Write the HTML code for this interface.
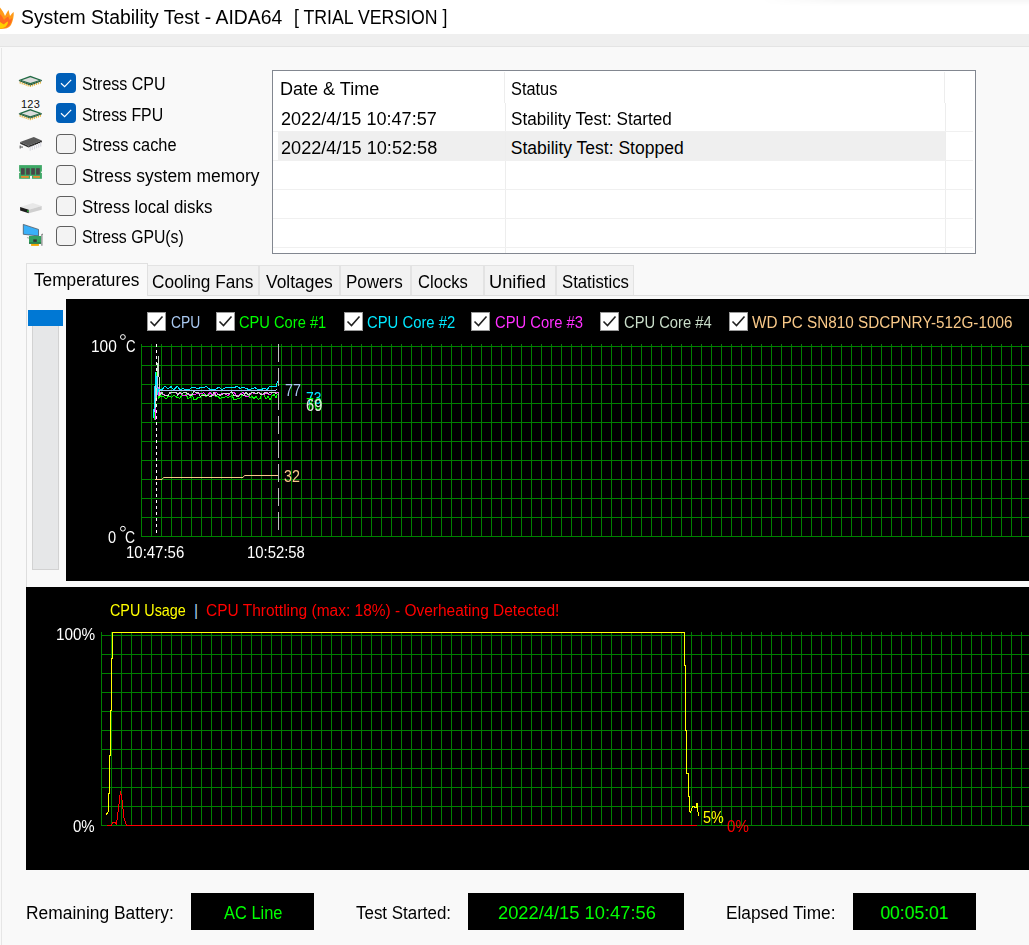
<!DOCTYPE html>
<html><head><meta charset="utf-8"><title>System Stability Test - AIDA64</title>
<style>
*{margin:0;padding:0;box-sizing:border-box}
html,body{width:1029px;height:945px;overflow:hidden;background:#f9f9f9;font-family:"Liberation Sans", sans-serif;}
body{position:relative}
.t{position:absolute;white-space:pre;font-family:"Liberation Sans", sans-serif;transform-origin:0 0}
.ov{position:absolute;left:0;top:0}
.ic{position:absolute}
#title{position:absolute;left:0;top:0;width:1029px;height:34px;background:#fff}
#shadow{position:absolute;left:760px;top:0;width:269px;height:6px;background:linear-gradient(to bottom,rgba(0,0,0,0.035),rgba(0,0,0,0));-webkit-mask-image:linear-gradient(to right,transparent,#000 80px)}
#band{position:absolute;left:0;top:34px;width:1029px;height:13px;background:#efefef;border-bottom:1px solid #e4e4e4}
#lborder{position:absolute;left:1px;top:48px;width:1px;height:897px;background:#e6e6e6}
.cb{position:absolute;left:56px;width:20px;height:20px;border-radius:4px;background:#f3f3f3;border:1px solid #5f5f5f}
.cb.on{background:#005fb8;border:none}
.cb svg{position:absolute;left:0;top:0}
#table{position:absolute;left:272px;top:70px;width:704px;height:184px;background:#fff;border:1px solid #828790}
.hl{position:absolute;left:278px;top:131px;width:667px;height:29px;background:#efefef}
.vl{position:absolute;width:1px;background:#ededed}
.hz{position:absolute;height:1px;background:#f0f0f0}
.tab{position:absolute;top:265px;height:30px;background:#f2f2f2;border:1px solid #e3e3e3;border-bottom:none}
#tabact{position:absolute;left:26px;top:263px;width:122px;height:33px;background:#f9f9f9;border:1px solid #e0e0e0;border-bottom:none;}
#tabpanel{position:absolute;left:26px;top:295px;width:1010px;height:292px;background:#f9f9f9;border-left:1px solid #dedede;border-top:1px solid #dedede}
#slider{position:absolute;left:28px;top:310px;width:35px;height:16px;background:#0078d4}
#trough{position:absolute;left:32px;top:326px;width:27px;height:244px;background:#e6e7e8;border:1px solid #d2d2d2;border-top:none}
.lcb{position:absolute;width:19px;height:19px;background:#fff;border:1px solid #9a9a9a}
.lcb svg{position:absolute;left:-1px;top:-1px}
.box{position:absolute;top:893px;height:37px;background:#000}
</style></head><body>
<div id="title"></div><div id="shadow"></div>
<div id="band"></div>
<div id="lborder"></div>
<div class="cb on" style="top:73.0px"><svg width="20" height="20" viewBox="0 0 20 20"><path d="M5 10.2 L8.6 13.6 L15.2 6.8" stroke="#fff" stroke-width="1.2" fill="none"/></svg></div><div class="cb on" style="top:103.0px"><svg width="20" height="20" viewBox="0 0 20 20"><path d="M5 10.2 L8.6 13.6 L15.2 6.8" stroke="#fff" stroke-width="1.2" fill="none"/></svg></div><div class="cb" style="top:134.0px"></div><div class="cb" style="top:165.0px"></div><div class="cb" style="top:196.0px"></div><div class="cb" style="top:226.0px"></div>
<div id="table"></div>
<div class="hl"></div>
<div class="vl" style="left:504px;top:72px;height:31px"></div><div class="vl" style="left:505px;top:103px;height:150px"></div>
<div class="vl" style="left:944px;top:72px;height:31px"></div><div class="vl" style="left:945px;top:103px;height:150px"></div>
<div class="hz" style="left:273px;top:189px;width:700px"></div>
<div class="hz" style="left:273px;top:218px;width:700px"></div>
<div class="hz" style="left:273px;top:247px;width:700px"></div>
<div class="hz" style="left:273px;top:131px;width:700px"></div><div class="hz" style="left:273px;top:160px;width:700px"></div>
<div class="tab" style="left:147px;width:112px"></div>
<div class="tab" style="left:259px;width:81px"></div>
<div class="tab" style="left:340px;width:71px"></div>
<div class="tab" style="left:411px;width:73px"></div>
<div class="tab" style="left:484px;width:72px"></div>
<div class="tab" style="left:556px;width:78px"></div>
<div id="tabpanel"></div>
<div id="tabact"></div>
<div id="slider"></div>
<div id="trough"></div>
<div class="box" style="left:191px;width:123px"></div>
<div class="box" style="left:468px;width:216px"></div>
<div class="box" style="left:853px;width:123px"></div>
<svg class="ov" width="1029" height="945" viewBox="0 0 1029 945"><rect x="66" y="299" width="963" height="282" fill="#000"/>
<rect x="26" y="587" width="1003" height="283" fill="#000"/>
<path d="M141.5 344V537M151.5 344V537M161.5 344V537M171.5 344V537M181.5 344V537M191.5 344V537M201.5 344V537M211.5 344V537M221.5 344V537M231.5 344V537M241.5 344V537M251.5 344V537M261.5 344V537M271.5 344V537M281.5 344V537M291.5 344V537M301.5 344V537M311.5 344V537M321.5 344V537M331.5 344V537M341.5 344V537M351.5 344V537M361.5 344V537M371.5 344V537M381.5 344V537M391.5 344V537M401.5 344V537M411.5 344V537M421.5 344V537M431.5 344V537M441.5 344V537M451.5 344V537M461.5 344V537M471.5 344V537M481.5 344V537M491.5 344V537M501.5 344V537M511.5 344V537M521.5 344V537M531.5 344V537M541.5 344V537M551.5 344V537M561.5 344V537M571.5 344V537M581.5 344V537M591.5 344V537M601.5 344V537M611.5 344V537M621.5 344V537M631.5 344V537M641.5 344V537M651.5 344V537M661.5 344V537M671.5 344V537M681.5 344V537M691.5 344V537M701.5 344V537M711.5 344V537M721.5 344V537M731.5 344V537M741.5 344V537M751.5 344V537M761.5 344V537M771.5 344V537M781.5 344V537M791.5 344V537M801.5 344V537M811.5 344V537M821.5 344V537M831.5 344V537M841.5 344V537M851.5 344V537M861.5 344V537M871.5 344V537M881.5 344V537M891.5 344V537M901.5 344V537M911.5 344V537M921.5 344V537M931.5 344V537M941.5 344V537M951.5 344V537M961.5 344V537M971.5 344V537M981.5 344V537M991.5 344V537M1001.5 344V537M1011.5 344V537M1021.5 344V537M141 346.5H1029M141 365.5H1029M141 384.5H1029M141 403.5H1029M141 422.5H1029M141 441.5H1029M141 460.5H1029M141 479.5H1029M141 498.5H1029M141 517.5H1029M141 536.5H1029" stroke="#008000" stroke-width="1" fill="none" shape-rendering="crispEdges"/>
<path d="M101.5 632V826M111.5 632V826M121.5 632V826M131.5 632V826M141.5 632V826M151.5 632V826M161.5 632V826M171.5 632V826M181.5 632V826M191.5 632V826M201.5 632V826M211.5 632V826M221.5 632V826M231.5 632V826M241.5 632V826M251.5 632V826M261.5 632V826M271.5 632V826M281.5 632V826M291.5 632V826M301.5 632V826M311.5 632V826M321.5 632V826M331.5 632V826M341.5 632V826M351.5 632V826M361.5 632V826M371.5 632V826M381.5 632V826M391.5 632V826M401.5 632V826M411.5 632V826M421.5 632V826M431.5 632V826M441.5 632V826M451.5 632V826M461.5 632V826M471.5 632V826M481.5 632V826M491.5 632V826M501.5 632V826M511.5 632V826M521.5 632V826M531.5 632V826M541.5 632V826M551.5 632V826M561.5 632V826M571.5 632V826M581.5 632V826M591.5 632V826M601.5 632V826M611.5 632V826M621.5 632V826M631.5 632V826M641.5 632V826M651.5 632V826M661.5 632V826M671.5 632V826M681.5 632V826M691.5 632V826M701.5 632V826M711.5 632V826M721.5 632V826M731.5 632V826M741.5 632V826M751.5 632V826M761.5 632V826M771.5 632V826M781.5 632V826M791.5 632V826M801.5 632V826M811.5 632V826M821.5 632V826M831.5 632V826M841.5 632V826M851.5 632V826M861.5 632V826M871.5 632V826M881.5 632V826M891.5 632V826M901.5 632V826M911.5 632V826M921.5 632V826M931.5 632V826M941.5 632V826M951.5 632V826M961.5 632V826M971.5 632V826M981.5 632V826M991.5 632V826M1001.5 632V826M1011.5 632V826M1021.5 632V826M101 635.5H1029M101 654.5H1029M101 673.5H1029M101 692.5H1029M101 711.5H1029M101 730.5H1029M101 749.5H1029M101 768.5H1029M101 787.5H1029M101 806.5H1029M101 825.5H1029" stroke="#008000" stroke-width="1" fill="none" shape-rendering="crispEdges"/>
<path d="M156.5 344V533" stroke="#fff" stroke-dasharray="3 3" shape-rendering="crispEdges"/>
<path d="M278.5 344V530" stroke="#c0c0c0" stroke-dasharray="18 6" shape-rendering="crispEdges"/>
<polyline points="155,479.5 162,479.5 163.5,477.5 243,477.5 244.5,475.5 278,475.5" stroke="#f8c888" fill="none" stroke-width="1"/>
<polyline points="154.0,420.0 155.5,405.0 157.0,372.0 158.5,398.0 160.5,396.0 162.0,396.5 164.0,397.1 166.0,399.1 168.0,396.6 170.0,396.8 172.0,397.2 174.0,395.0 176.0,396.8 178.0,397.5 180.0,398.4 182.0,394.5 184.0,395.7 186.0,394.5 188.0,398.5 190.0,397.8 192.0,394.2 194.0,399.4 196.0,399.3 198.0,397.6 200.0,397.4 202.0,394.9 204.0,394.1 206.0,396.9 208.0,394.3 210.0,395.0 212.0,395.3 214.0,394.2 216.0,396.6 218.0,396.4 220.0,398.6 222.0,396.9 224.0,397.5 226.0,396.7 228.0,397.6 230.0,396.5 232.0,395.5 234.0,399.5 236.0,399.5 238.0,398.6 240.0,397.9 242.0,395.7 244.0,395.3 246.0,395.6 248.0,394.4 250.0,398.2 252.0,396.2 254.0,398.7 256.0,396.1 258.0,399.3 260.0,398.7 262.0,394.0 264.0,395.2 266.0,399.0 268.0,396.6 270.0,399.4 272.0,396.2 274.0,394.4 276.0,397.5 277.5,394.0" stroke="#00ff00" fill="none" stroke-width="1" shape-rendering="crispEdges"/>
<polyline points="155.0,421.0 156.0,395.0 157.5,382.0 159.0,396.0 160.5,393.0 162.0,394.1 165.0,395.0 168.0,395.0 171.0,392.6 174.0,392.0 177.0,393.7 180.0,393.2 183.0,395.6 186.0,395.1 189.0,394.7 192.0,394.5 195.0,395.0 198.0,392.7 201.0,394.0 204.0,392.7 207.0,396.1 210.0,392.3 213.0,395.7 216.0,392.3 219.0,395.1 222.0,393.5 225.0,393.8 228.0,395.8 231.0,392.1 234.0,392.3 237.0,396.1 240.0,394.3 243.0,392.4 246.0,396.4 249.0,396.3 252.0,392.5 255.0,393.9 258.0,392.6 261.0,393.4 264.0,394.8 267.0,392.7 270.0,395.1 273.0,392.2 276.0,392.8 277.5,392.0" stroke="#ff30ff" fill="none" stroke-width="1" shape-rendering="crispEdges"/>
<polyline points="155.5,408.0 157.0,378.0 158.5,356.0 159.5,396.0 160.5,394.0 162.0,392.6 164.0,395.1 166.0,395.1 168.0,396.1 170.0,392.1 172.0,392.4 174.0,391.9 176.0,392.4 178.0,395.4 180.0,391.8 182.0,394.2 184.0,392.3 186.0,392.8 188.0,393.6 190.0,396.0 192.0,394.7 194.0,391.1 196.0,392.7 198.0,391.9 200.0,396.2 202.0,395.9 204.0,395.8 206.0,396.0 208.0,395.5 210.0,396.7 212.0,395.8 214.0,392.5 216.0,396.1 218.0,393.9 220.0,395.5 222.0,394.4 224.0,393.6 226.0,393.2 228.0,393.6 230.0,392.9 232.0,391.7 234.0,395.9 236.0,395.8 238.0,396.9 240.0,395.1 242.0,394.3 244.0,395.5 246.0,391.8 248.0,395.1 250.0,393.7 252.0,392.1 254.0,392.2 256.0,394.1 258.0,392.5 260.0,393.8 262.0,394.6 264.0,393.4 266.0,391.8 268.0,393.9 270.0,392.4 272.0,392.4 274.0,392.2 276.0,393.2 277.5,393.0" stroke="#c8dcc8" fill="none" stroke-width="1" shape-rendering="crispEdges"/>
<polyline points="154.5,412.0 155.5,385.0 157.0,376.0 158.0,392.0 160.5,390.5 162.0,390.1 168.0,390.7 174.0,390.7 180.0,390.9 186.0,390.3 192.0,390.3 198.0,390.7 204.0,390.7 210.0,390.3 216.0,390.7 222.0,390.4 228.0,390.8 234.0,390.1 240.0,390.2 246.0,390.9 252.0,390.4 258.0,390.3 264.0,390.8 270.0,390.6 276.0,390.1 277.5,389.5" stroke="#a8c8f0" fill="none" stroke-width="1" shape-rendering="crispEdges"/>
<polyline points="153.5,418.0 154.5,400.0 155.5,372.0 156.5,380.0 157.5,395.0 158.5,389.0 160.5,389.0 162.0,389.9 165.0,386.0 168.0,388.9 171.0,386.6 174.0,389.9 177.0,386.1 180.0,389.5 183.0,388.7 186.0,389.4 189.0,390.0 192.0,387.0 195.0,387.4 198.0,388.8 201.0,387.1 204.0,387.1 207.0,386.9 210.0,389.4 213.0,389.5 216.0,389.2 219.0,386.9 222.0,389.7 225.0,388.0 228.0,386.9 231.0,387.8 234.0,387.7 237.0,386.3 240.0,388.3 243.0,387.4 246.0,388.3 249.0,389.7 252.0,388.6 255.0,387.6 258.0,389.5 261.0,390.0 264.0,388.0 267.0,389.8 270.0,386.1 273.0,386.6 276.0,386.7 277.5,381.0" stroke="#00e8ff" fill="none" stroke-width="1" shape-rendering="crispEdges"/>
<polyline points="105.5,815.5 108.5,811.5 108.5,793.0 109.5,793.0 109.5,755.0 110.5,755.0 110.5,710.0 111.5,710.0 111.5,658.0 112.5,658.0 112.5,632.5 684.5,632.5 684.5,665.0 685.5,665.0 685.5,730.0 686.5,730.0 686.5,773.0 688.0,773.0 688.0,796.0 689.0,796.0 689.5,811.0 690.5,812.0 693.0,806.0 696.0,808.0 697.0,803.0 698.5,816.0" stroke="#ffff00" fill="none" stroke-width="1" shape-rendering="crispEdges"/>
<polyline points="107.0,825.5 111.5,825.5 112.5,822.5 115.5,822.5 116.5,825.0 118.0,812.0 120.5,791.5 122.0,800.0 124.0,818.0 126.5,825.5 697.0,825.5" stroke="#ff0000" fill="none" stroke-width="1" shape-rendering="crispEdges"/>
<circle cx="122.9" cy="337" r="2.4" stroke="#fff" fill="none" stroke-width="1"/>
<circle cx="122.9" cy="528.7" r="2.4" stroke="#fff" fill="none" stroke-width="1"/></svg>
<div class="lcb" style="left:147.0px;top:312px"><svg width="19" height="19" viewBox="0 0 19 19"><path d="M3.5 9.5 L7.5 13.5 L15.5 4.5" stroke="#202020" stroke-width="1.6" fill="none"/></svg></div><div class="lcb" style="left:216.0px;top:312px"><svg width="19" height="19" viewBox="0 0 19 19"><path d="M3.5 9.5 L7.5 13.5 L15.5 4.5" stroke="#202020" stroke-width="1.6" fill="none"/></svg></div><div class="lcb" style="left:344.0px;top:312px"><svg width="19" height="19" viewBox="0 0 19 19"><path d="M3.5 9.5 L7.5 13.5 L15.5 4.5" stroke="#202020" stroke-width="1.6" fill="none"/></svg></div><div class="lcb" style="left:471.0px;top:312px"><svg width="19" height="19" viewBox="0 0 19 19"><path d="M3.5 9.5 L7.5 13.5 L15.5 4.5" stroke="#202020" stroke-width="1.6" fill="none"/></svg></div><div class="lcb" style="left:600.0px;top:312px"><svg width="19" height="19" viewBox="0 0 19 19"><path d="M3.5 9.5 L7.5 13.5 L15.5 4.5" stroke="#202020" stroke-width="1.6" fill="none"/></svg></div><div class="lcb" style="left:729.0px;top:312px"><svg width="19" height="19" viewBox="0 0 19 19"><path d="M3.5 9.5 L7.5 13.5 L15.5 4.5" stroke="#202020" stroke-width="1.6" fill="none"/></svg></div>

<svg class="ic" style="left:17px;top:72px" width="28" height="180" viewBox="0 0 28 180">
 <defs>
  <g id="chip">
   <path d="M3.2 9.6V11.6 M5.2 10.3V12.3 M7.2 11V13 M9.2 11.7V13.7 M11.2 12.4V14.4 M13.3 13V15 M15.3 12.4V14.4 M17.3 11.7V13.7 M19.3 11V13 M21.3 10.3V12.3 M23.3 9.6V11.6" stroke="#e0a820" stroke-width="1"/>
   <path d="M1.9 8.1 L13.3 3.7 L24.9 8.1 L13.3 12.6 Z" fill="#236b45"/>
   <path d="M1.9 8.1 L13.3 12.6 L24.9 8.1 L24.9 9 L13.3 13.4 L1.9 9 Z" fill="#134a2c"/>
   <path d="M4.8 8.2 L13.3 5.3 L22 8.2 L13.3 11.1 Z" fill="#dcdcdc"/>
  </g>
 </defs>
 <use href="#chip" x="0" y="0"/>
 <text x="3.9" y="35.8" font-size="11" font-family="Liberation Sans" fill="#111" textLength="19" lengthAdjust="spacing">123</text>
 <use href="#chip" x="0" y="33.2"/>
 <!-- cache DIP -->
 <path d="M3.2 73.5 V76.5 M5 74.2 V76" stroke="#3a3a3a" stroke-width="1"/>
 <path d="M3.2 69.9 L16.8 65 L24.8 68.5 L11.5 73.8 Z" fill="#5a5a5a"/>
 <path d="M3.2 69.9 L11.5 73.8 L11.5 75.6 L3.2 71.8 Z" fill="#333"/>
 <path d="M11.5 73.8 L24.8 68.5 L24.8 70.3 L11.5 75.6 Z" fill="#222"/>
 <path d="M13.2 74.5V78.8 M15.3 73.7V78 M17.5 72.8V77.2 M19.6 72V76.3 M21.7 71.1V75.5 M23.7 70.3V74.6" stroke="#d8d8e0" stroke-width="1.1"/>
 <!-- memory -->
 <rect x="2.1" y="93.1" width="22.8" height="13.7" fill="#3fa866"/>
 <rect x="2.1" y="99.6" width="1" height="1.4" fill="#f8f8f8"/>
 <rect x="23.9" y="99.6" width="1" height="1.4" fill="#f8f8f8"/>
 <rect x="4" y="96.2" width="3.7" height="6.5" fill="#4a4548"/>
 <rect x="9.1" y="96.2" width="3.7" height="6.5" fill="#4a4548"/>
 <rect x="14.2" y="96.2" width="3.7" height="6.5" fill="#4a4548"/>
 <rect x="19.1" y="96.2" width="3.7" height="6.5" fill="#4a4548"/>
 <rect x="4.1" y="104" width="7.7" height="1.8" fill="#e88a30"/>
 <rect x="16.2" y="104" width="6.7" height="1.8" fill="#e88a30"/>
 <rect x="13" y="103.9" width="2" height="3" fill="#f9f9f9"/>
 <!-- disk -->
 <path d="M3.1 134.9 L15.9 130.9 L24.7 134.1 L11.8 137.7 Z" fill="#e8e8e8"/>
 <path d="M3.1 134.9 L11.8 137.7 L11.8 141.2 L3.1 138.6 Z" fill="#1e1e1e"/>
 <path d="M11.8 137.7 L24.7 134.1 L24.7 137.7 L11.8 141.2 Z" fill="#cfcfcf"/>
 <rect x="10.2" y="138.3" width="1.3" height="1.6" fill="#20c030"/>
 <!-- gpu -->
 <path d="M6.3 152.4 L21.5 157.4 L21.5 163.9 L6.3 162.3 Z" fill="#3ab0f8" stroke="#404850" stroke-width="0.7"/>
 <path d="M10 165.5 L13 166.5" stroke="#b0b0b0" stroke-width="1.2"/>
 <rect x="12" y="164" width="12.1" height="7.7" fill="#35a060"/>
 <rect x="12" y="170.5" width="12.1" height="1.2" fill="#1e6a3c"/>
 <rect x="16.3" y="167.4" width="3.5" height="2.5" fill="#333"/>
 <rect x="14.1" y="172" width="7.8" height="1.9" fill="#f5a800"/>
 <path d="M24.9 162.1 V173.7 M24.9 162.3 H26" stroke="#7a7a7a" stroke-width="1.1"/>
</svg>
<svg class="ic" style="left:0px;top:6px" width="16" height="25" viewBox="0 0 16 25">
 <path d="M0 1.5 C2 4 4 7 5 10 C6 8 7.5 5.5 8.5 4 C9 6 9.5 8 10 10 C11 8.5 12.5 7 13.7 6 C14 10 13 15 11 19 C9 22 5 23 1 23 L0 23 Z" fill="#ff9a18"/>
 <path d="M0 8 C2 10 3 12 4 14 C5.5 12 7 11 8.5 10.5 C8.5 12 9 13 10 14 C11 13 11.5 12.5 12 12 C12 16 10 20 6 21.5 C4 22 2 22 0 22 Z" fill="#ff6a20"/>
 <path d="M0 16 C1.5 17 3 18 4 18.5 C5 17 6.5 16 8 15.5 C8 18 6.5 21 3 22 C2 22.3 1 22.5 0 22.5 Z" fill="#ffd000"/>
</svg>

<div class="t" style="left:20.90px;top:7.07px;font-size:20px;line-height:20px;color:#000;transform:scaleX(0.9684);">System Stability Test - AIDA64</div>
<div class="t" style="left:294.42px;top:7.07px;font-size:20px;line-height:20px;color:#000;transform:scaleX(0.8848);">[ TRIAL VERSION ]</div>
<div class="t" style="left:81.70px;top:75.88px;font-size:17.5px;line-height:17.5px;color:#000;transform:scaleX(0.9144);">Stress CPU</div>
<div class="t" style="left:81.70px;top:106.58px;font-size:17.5px;line-height:17.5px;color:#000;transform:scaleX(0.9075);">Stress FPU</div>
<div class="t" style="left:81.70px;top:137.28px;font-size:17.5px;line-height:17.5px;color:#000;transform:scaleX(0.9341);">Stress cache</div>
<div class="t" style="left:81.70px;top:167.98px;font-size:17.5px;line-height:17.5px;color:#000;transform:scaleX(0.9978);">Stress system memory</div>
<div class="t" style="left:81.70px;top:198.68px;font-size:17.5px;line-height:17.5px;color:#000;transform:scaleX(0.9643);">Stress local disks</div>
<div class="t" style="left:81.70px;top:229.38px;font-size:17.5px;line-height:17.5px;color:#000;transform:scaleX(0.9021);">Stress GPU(s)</div>
<div class="t" style="left:279.77px;top:80.98px;font-size:17.5px;line-height:17.5px;color:#000;transform:scaleX(1.0309);">Date &amp; Time</div>
<div class="t" style="left:510.80px;top:80.98px;font-size:17.5px;line-height:17.5px;color:#000;transform:scaleX(0.9346);">Status</div>
<div class="t" style="left:280.80px;top:110.78px;font-size:17.5px;line-height:17.5px;color:#000;transform:scaleX(1.0326);">2022/4/15 10:47:57</div>
<div class="t" style="left:510.80px;top:110.78px;font-size:17.5px;line-height:17.5px;color:#000;transform:scaleX(0.9796);">Stability Test: Started</div>
<div class="t" style="left:280.80px;top:139.88px;font-size:17.5px;line-height:17.5px;color:#000;transform:scaleX(1.0360);">2022/4/15 10:52:58</div>
<div class="t" style="left:510.80px;top:139.88px;font-size:17.5px;line-height:17.5px;color:#000;">Stability Test: Stopped</div>
<div class="t" style="left:33.90px;top:272.18px;font-size:17.5px;line-height:17.5px;color:#000;transform:scaleX(0.9847);">Temperatures</div>
<div class="t" style="left:152.00px;top:273.68px;font-size:17.5px;line-height:17.5px;color:#000;transform:scaleX(0.9839);">Cooling Fans</div>
<div class="t" style="left:266.00px;top:273.68px;font-size:17.5px;line-height:17.5px;color:#000;transform:scaleX(0.9943);">Voltages</div>
<div class="t" style="left:345.53px;top:273.68px;font-size:17.5px;line-height:17.5px;color:#000;transform:scaleX(0.9722);">Powers</div>
<div class="t" style="left:418.40px;top:273.68px;font-size:17.5px;line-height:17.5px;color:#000;transform:scaleX(0.9477);">Clocks</div>
<div class="t" style="left:489.36px;top:273.68px;font-size:17.5px;line-height:17.5px;color:#000;transform:scaleX(1.0447);">Unified</div>
<div class="t" style="left:562.40px;top:273.68px;font-size:17.5px;line-height:17.5px;color:#000;transform:scaleX(0.9564);">Statistics</div>
<div class="t" style="left:25.61px;top:905.18px;font-size:17.5px;line-height:17.5px;color:#000;transform:scaleX(0.9935);">Remaining Battery:</div>
<div class="t" style="left:356.40px;top:905.18px;font-size:17.5px;line-height:17.5px;color:#000;transform:scaleX(0.9674);">Test Started:</div>
<div class="t" style="left:726.01px;top:905.18px;font-size:17.5px;line-height:17.5px;color:#000;transform:scaleX(0.9877);">Elapsed Time:</div>
<div class="t" style="left:223.70px;top:905.18px;font-size:17.5px;line-height:17.5px;color:#00ff00;transform:scaleX(0.9394);">AC Line</div>
<div class="t" style="left:497.60px;top:905.18px;font-size:17.5px;line-height:17.5px;color:#00ff00;transform:scaleX(1.0466);">2022/4/15 10:47:56</div>
<div class="t" style="left:880.40px;top:905.18px;font-size:17.5px;line-height:17.5px;color:#00ff00;">00:05:01</div>
<div class="t" style="left:170.50px;top:315.45px;font-size:16px;line-height:16px;color:#a8c8f0;transform:scaleX(0.8668);">CPU</div>
<div class="t" style="left:239.40px;top:315.45px;font-size:16px;line-height:16px;color:#00ff00;transform:scaleX(0.9165);">CPU Core #1</div>
<div class="t" style="left:367.00px;top:315.45px;font-size:16px;line-height:16px;color:#00e8ff;transform:scaleX(0.9270);">CPU Core #2</div>
<div class="t" style="left:494.80px;top:315.45px;font-size:16px;line-height:16px;color:#ff30ff;transform:scaleX(0.9239);">CPU Core #3</div>
<div class="t" style="left:624.00px;top:315.45px;font-size:16px;line-height:16px;color:#c8dcc8;transform:scaleX(0.9207);">CPU Core #4</div>
<div class="t" style="left:751.50px;top:315.45px;font-size:16px;line-height:16px;color:#f8c888;transform:scaleX(0.9538);">WD PC SN810 SDCPNRY-512G-1006</div>
<div class="t" style="left:90.83px;top:338.65px;font-size:16px;line-height:16px;color:#fff;transform:scaleX(0.9652);">100</div>
<div class="t" style="left:125.80px;top:338.65px;font-size:16px;line-height:16px;color:#fff;transform:scaleX(0.8273);">C</div>
<div class="t" style="left:108.40px;top:530.25px;font-size:16px;line-height:16px;color:#fff;transform:scaleX(0.9111);">0</div>
<div class="t" style="left:125.40px;top:530.25px;font-size:16px;line-height:16px;color:#fff;transform:scaleX(0.8727);">C</div>
<div class="t" style="left:125.86px;top:545.45px;font-size:16px;line-height:16px;color:#fff;transform:scaleX(0.9351);">10:47:56</div>
<div class="t" style="left:247.07px;top:545.45px;font-size:16px;line-height:16px;color:#fff;transform:scaleX(0.9286);">10:52:58</div>
<div class="t" style="left:284.70px;top:383.15px;font-size:16px;line-height:16px;color:#a8c8f0;transform:scaleX(0.8939);">77</div>
<div class="t" style="left:305.50px;top:390.95px;font-size:16px;line-height:16px;color:#00e8ff;transform:scaleX(0.8660);">73</div>
<div class="t" style="left:305.50px;top:397.25px;font-size:16px;line-height:16px;color:#00ff00;transform:scaleX(0.8939);">70</div>
<div class="t" style="left:305.50px;top:398.35px;font-size:16px;line-height:16px;color:#e4e8e0;transform:scaleX(0.9219);">69</div>
<div class="t" style="left:284.00px;top:469.45px;font-size:16px;line-height:16px;color:#f8c888;transform:scaleX(0.8939);">32</div>
<div class="t" style="left:109.80px;top:603.45px;font-size:16px;line-height:16px;color:#ffff00;transform:scaleX(0.8974);">CPU Usage</div>
<div class="t" style="left:194.00px;top:603.45px;font-size:16px;line-height:16px;color:#a8c8f0;">|</div>
<div class="t" style="left:206.30px;top:603.45px;font-size:16px;line-height:16px;color:#ff0000;transform:scaleX(0.9675);">CPU Throttling (max: 18%) - Overheating Detected!</div>
<div class="t" style="left:55.84px;top:626.75px;font-size:16px;line-height:16px;color:#fff;transform:scaleX(0.9573);">100%</div>
<div class="t" style="left:73.20px;top:819.35px;font-size:16px;line-height:16px;color:#fff;transform:scaleX(0.9389);">0%</div>
<div class="t" style="left:702.50px;top:810.25px;font-size:16px;line-height:16px;color:#ffff00;transform:scaleX(0.8953);">5%</div>
<div class="t" style="left:727.40px;top:818.95px;font-size:16px;line-height:16px;color:#ff0000;transform:scaleX(0.9433);">0%</div>
</body></html>
